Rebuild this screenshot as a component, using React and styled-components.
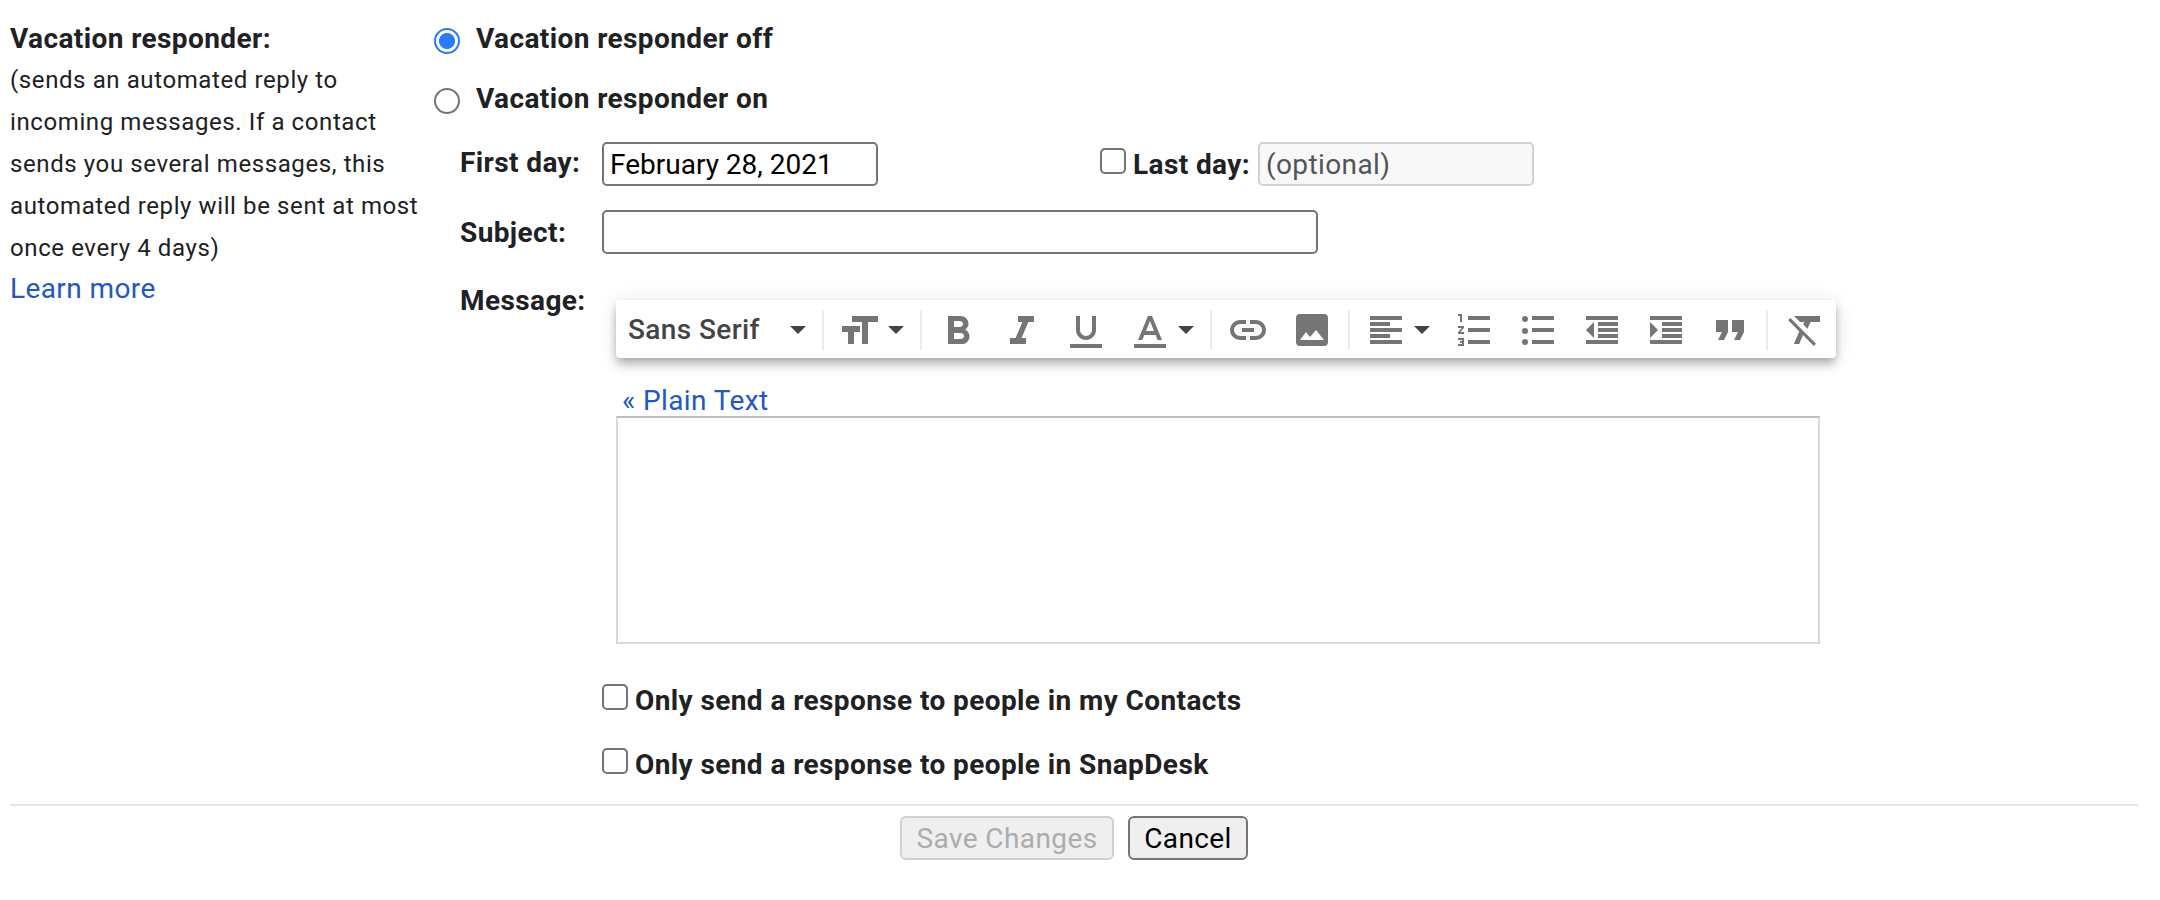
import React from "react";
import styled, { createGlobalStyle, css } from "styled-components";

const GlobalStyle = createGlobalStyle`
  * { box-sizing: border-box; }
  body {
    margin: 0;
    background: #fff;
    font-family: Roboto, "Liberation Sans", sans-serif;
    font-size: 28px;
    line-height: 40px;
    letter-spacing: 0.4px;
    color: #202124;
  }
`;

const Page = styled.main`
  width: 2138px;
  padding: 19px 0 0 10px;
`;

const Setting = styled.section`
  display: flex;
  height: 787px;
  border-bottom: 2px solid #e5e5e5;
`;

const Summary = styled.div`
  width: 424px;
  padding-right: 10px;
`;

const Title = styled.div`
  font-weight: 700;
`;

const Description = styled.p`
  margin: 0;
  font-size: 24px;
  line-height: 42px;
  letter-spacing: 0.6px;
`;

const Link = styled.a`
  color: #2058ca;
  text-decoration: none;
`;

const Options = styled.div`
  flex: 1;
`;

const RadioRow = styled.label`
  display: flex;
  align-items: flex-start;
  height: 60px;
  font-weight: 700;
`;

const boxControl = css`
  appearance: none;
  flex: none;
  width: 26px;
  height: 26px;
  border: 2px solid #757575;
  background: #fff;
`;

const Radio = styled.input.attrs({ type: "radio" })`
  ${boxControl}
  margin: 9px 16px 0 0;
  border-radius: 50%;
  &:checked {
    border-color: #2a7bfb;
    background: radial-gradient(circle, #2a7bfb 7.6px, #fff 8.4px);
  }
`;

const Checkbox = styled.input.attrs({ type: "checkbox" })`
  ${boxControl}
  margin: 0 7px 0 0;
  border-radius: 5px;
`;

const Fields = styled.div`
  padding-top: 3px;
`;

const Field = styled.div`
  display: flex;
  align-items: flex-start;
  height: ${(p) => p.$height}px;
  padding-left: 26px;
`;

const FieldLabel = styled.label`
  width: 142px;
  padding-top: ${(p) => p.$top}px;
  font-weight: 700;
`;

const TextInput = styled.input`
  width: ${(p) => p.$width}px;
  height: 44px;
  margin: 0;
  padding: 1px 6px 0;
  border: 2px solid #757575;
  border-radius: 5px;
  background: #fff;
  color: #000;
  font: 28px Roboto, "Liberation Sans", sans-serif;
  letter-spacing: ${(p) => p.$spacing || "0"};
  &:disabled {
    border-color: #d1d1d1;
    background: #f8f8f8;
    color: #545454;
  }
`;

const LastDay = styled.label`
  display: flex;
  margin-left: 222px;
  font-weight: 700;
  ${Checkbox} { margin-top: 6px; }
`;

const LastDayText = styled.span`
  width: 125px;
  padding-top: 3px;
`;

const Editor = styled.div`
  width: 1220px;
  margin-left: 14px;
  padding-top: 22px;
`;

const Toolbar = styled.div`
  display: flex;
  align-items: center;
  height: 58px;
  border-radius: 4px;
  background: #fff;
  box-shadow:
    0 4px 8px -2px rgba(0, 0, 0, 0.2),
    0 8px 10px 0 rgba(0, 0, 0, 0.14),
    0 2px 20px 0 rgba(0, 0, 0, 0.12);
`;

const FontSelect = styled.div`
  display: flex;
  align-items: center;
  justify-content: space-between;
  width: 202px;
  padding: 2px 12px 0;
  color: #444;
  font-weight: 500;
`;

const Tool = styled.div`
  display: flex;
  align-items: center;
  justify-content: center;
  width: 64px;
  height: 58px;
`;

const MenuTool = styled(Tool)`
  width: 88px;
  gap: 8px;
`;

const Separator = styled.div`
  width: 2px;
  height: 40px;
  margin: 2px 4px 0;
  background: #ebebeb;
`;

const Glyph = styled.svg`
  flex: none;
  width: 40px;
  height: 40px;
  margin-top: 2px;
  fill: #757575;
`;

const Caret = styled.span`
  flex: none;
  border: 8px solid transparent;
  border-top-color: #444;
  border-bottom: 0;
  ${MenuTool} & { margin-top: 2px; }
`;

const ModeRow = styled.div`
  height: 58px;
  padding: 23px 0 0 6px;
`;

const MessageArea = styled.textarea`
  display: block;
  width: 1204px;
  height: 228px;
  margin: 0;
  border: 2px solid #d9d9d9;
  border-top-color: #bdbdbd;
  background: #fff;
  resize: none;
  outline: none;
`;

const Audience = styled.label`
  display: flex;
  height: 64px;
  margin-left: 168px;
  font-weight: 700;
  ${Checkbox} { margin-top: 7px; }
`;

const AudienceText = styled.span`
  padding-top: 4px;
`;

const Actions = styled.div`
  display: flex;
  gap: 14px;
  padding: 10px 0 0 890px;
`;

const Button = styled.button`
  width: ${(p) => p.$width}px;
  height: 44px;
  padding: 0;
  border: 2px solid #757575;
  border-radius: 6px;
  background: #efefef;
  color: #000;
  font: 28px Roboto, "Liberation Sans", sans-serif;
  letter-spacing: 0.4px;
  &:disabled {
    border-color: #d0d0d0;
    color: #acacac;
  }
`;

const glyphs = {
  size: <path d="M12 6h26v6H28v22h-6V12H12zM2 16h18v6h-6v12H8V22H2z" />,
  bold: (
    <path
      transform="translate(-4 -2) scale(2)"
      d="M15.6 10.79c.97-.67 1.65-1.77 1.65-2.79 0-2.26-1.75-4-4-4H7v14h7.04c2.09 0 3.71-1.7 3.71-3.79 0-1.52-.86-2.82-2.15-3.42zM10 6.5h3c.83 0 1.5.67 1.5 1.5s-.67 1.5-1.5 1.5h-3v-3zm3.5 9H10v-3h3.5c.83 0 1.5.67 1.5 1.5s-.67 1.5-1.5 1.5z"
    />
  ),
  italic: (
    <path
      transform="translate(-4 -2) scale(2)"
      d="M10 4v3h2.21l-3.42 8H6v3h8v-3h-2.21l3.42-8H18V4z"
    />
  ),
  underline: (
    <path d="M20 30c5.5 0 10-4.5 10-10V6h-4v14a6 6 0 0 1-12 0V6h-4v14c0 5.5 4.5 10 10 10zM4 34h32v4H4z" />
  ),
  color: (
    <path
      fillRule="evenodd"
      d="M18 6h4l10 24h-4.3l-2.1-5H14.4l-2.1 5H8zM16 21h8l-4-10zM4 34h32v4H4z"
    />
  ),
  link: (
    <path d="M18 10h-6a10 10 0 0 0 0 20h6v-4h-6a6 6 0 0 1 0-12h6zM22 10h6a10 10 0 0 1 0 20h-6v-4h6a6 6 0 0 0 0-12h-6zM14 18h12v4H14z" />
  ),
  image: (
    <path
      fillRule="evenodd"
      d="M8 4h24a4 4 0 0 1 4 4v24a4 4 0 0 1-4 4H8a4 4 0 0 1-4-4V8a4 4 0 0 1 4-4zM8 30h24l-8-10-6 7-4-5z"
    />
  ),
  align: <path d="M4 6h32v4H4zM4 12h20v4H4zM4 18h32v4H4zM4 24h20v4H4zM4 30h32v4H4z" />,
  numbered: (
    <>
      <path d="M14 6h22v4H14zM14 18h22v4H14zM14 30h22v4H14z" />
      <path
        transform="translate(0 -4) scale(2)"
        d="M2 17h2v.5H3v1h1v.5H2v1h3v-4H2v1zm1-9h1V4H2v1h1v3zm-1 3h1.8L2 13.1v.9h3v-1H3.2L5 10.9V10H2v1z"
      />
    </>
  ),
  bulleted: (
    <>
      <path d="M14 6h22v4H14zM14 18h22v4H14zM14 30h22v4H14z" />
      <circle cx="7" cy="9" r="3" />
      <circle cx="7" cy="21" r="3" />
      <circle cx="7" cy="32" r="3" />
    </>
  ),
  outdent: (
    <path d="M4 6h32v4H4zM16 12h20v4H16zM16 18h20v4H16zM16 24h20v4H16zM4 30h32v4H4zM12 12v16l-8-8z" />
  ),
  indent: (
    <path d="M4 6h32v4H4zM16 12h20v4H16zM16 18h20v4H16zM16 24h20v4H16zM4 30h32v4H4zM4 12v16l8-8z" />
  ),
  quote: <path d="M6 10h12v12l-4 8H8l4-8H6zM22 10h12v12l-4 8h-6l4-8h-6z" />,
  clear: (
    <path d="M10 6h26v6H26.5l-3 6.8-4.3-4.3 1.1-2.5H16zM6.3 8l25.7 25.7-2.2 2.2-10.8-10.8-3.8 8.9h-5.3l5.4-12.5L4.2 10.2z" />
  ),
};

const Icon = ({ name }) => (
  <Glyph viewBox="0 0 40 40" aria-hidden="true">
    {glyphs[name]}
  </Glyph>
);

const ToolButton = ({ name }) => (
  <Tool>
    <Icon name={name} />
  </Tool>
);

const MenuButton = ({ name }) => (
  <MenuTool>
    <Icon name={name} />
    <Caret />
  </MenuTool>
);

export default function App() {
  return (
    <>
      <GlobalStyle />
      <Page>
        <Setting>
          <Summary>
            <Title>Vacation responder:</Title>
            <Description>
              (sends an automated reply to incoming messages. If a contact sends you several
              messages, this automated reply will be sent at most once every 4 days)
            </Description>
            <Link>Learn more</Link>
          </Summary>
          <Options>
            <RadioRow>
              <Radio name="responder" defaultChecked />
              Vacation responder off
            </RadioRow>
            <RadioRow>
              <Radio name="responder" />
              Vacation responder on
            </RadioRow>
            <Fields>
              <Field $height={68}>
                <FieldLabel $top={1}>First day:</FieldLabel>
                <TextInput $width={276} defaultValue="February 28, 2021" />
                <LastDay>
                  <Checkbox />
                  <LastDayText>Last day:</LastDayText>
                  <TextInput $width={276} $spacing="0.4px" disabled defaultValue="(optional)" />
                </LastDay>
              </Field>
              <Field $height={68}>
                <FieldLabel $top={3}>Subject:</FieldLabel>
                <TextInput $width={716} />
              </Field>
              <Field $height={399}>
                <FieldLabel $top={3}>Message:</FieldLabel>
                <Editor>
                  <Toolbar>
                    <FontSelect>
                      Sans Serif
                      <Caret />
                    </FontSelect>
                    <Separator />
                    <MenuButton name="size" />
                    <Separator />
                    <ToolButton name="bold" />
                    <ToolButton name="italic" />
                    <ToolButton name="underline" />
                    <MenuButton name="color" />
                    <Separator />
                    <ToolButton name="link" />
                    <ToolButton name="image" />
                    <Separator />
                    <MenuButton name="align" />
                    <ToolButton name="numbered" />
                    <ToolButton name="bulleted" />
                    <ToolButton name="outdent" />
                    <ToolButton name="indent" />
                    <ToolButton name="quote" />
                    <Separator />
                    <ToolButton name="clear" />
                  </Toolbar>
                  <ModeRow>
                    <Link>« Plain Text</Link>
                  </ModeRow>
                  <MessageArea />
                </Editor>
              </Field>
              <Audience>
                <Checkbox />
                <AudienceText>Only send a response to people in my Contacts</AudienceText>
              </Audience>
              <Audience>
                <Checkbox />
                <AudienceText>Only send a response to people in SnapDesk</AudienceText>
              </Audience>
            </Fields>
          </Options>
        </Setting>
        <Actions>
          <Button $width={214} disabled>Save Changes</Button>
          <Button $width={120}>Cancel</Button>
        </Actions>
      </Page>
    </>
  );
}
